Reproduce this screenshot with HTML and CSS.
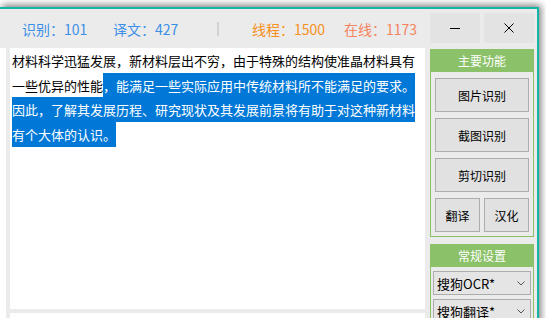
FILE: index.html
```html
<!DOCTYPE html>
<html lang="zh-CN">
  <head>
    <meta charset="UTF-8" />
    <meta name="viewport" content="width=device-width, initial-scale=1.0" />
    <title>OCR 识别</title>
    <link rel="stylesheet" href="styles.css">
  </head>

  <body>
    <div class="window">
      <header class="titlebar">
        <div class="stats">
          <span class="stat stat-ocr">识别：101</span>
          <span class="stat stat-trans">译文：427</span>
          <span class="divider"></span>
          <span class="stat stat-threads">线程：1500</span>
          <span class="stat stat-online">在线：1173</span>
        </div>
        <div class="controls">
          <button class="ctl" aria-label="最小化">
            <svg width="10" height="10" viewBox="0 0 10 10">
              <path d="M0 5.5h10" stroke="#000" stroke-width="1" fill="none" />
            </svg>
          </button>
          <button class="ctl" aria-label="关闭">
            <svg width="10" height="10" viewBox="0 0 10 10">
              <path d="M0.5 0.5l9 9M9.5 0.5l-9 9" stroke="#000" stroke-width="1" fill="none" />
            </svg>
          </button>
        </div>
      </header>

      <div class="main">
        <div class="edge"></div>

        <div class="editor">
          <div class="textbox">材料科学迅猛发展，新材料层出不穷，由于特殊的结构使准晶材料具有一些优异的性能<span class="sel">，能满足一些实际应用中传统材料所不能满足的要求。因此，了解其发展历程、研究现状及其发展前景将有助于对这种新材料有个大体的认识。</span></div>
          <div class="textbox lower"></div>
        </div>

        <aside class="sidebar">
          <section class="group">
            <h2 class="group-title">主要功能</h2>
            <div class="group-body">
              <button class="btn">图片识别</button>
              <button class="btn">截图识别</button>
              <button class="btn">剪切识别</button>
              <div class="btn-row">
                <button class="btn">翻译</button>
                <button class="btn">汉化</button>
              </div>
            </div>
          </section>

          <section class="group">
            <h2 class="group-title">常规设置</h2>
            <div class="group-body settings">
              <div class="select">
                <span>搜狗OCR*</span>
                <svg width="8" height="5" viewBox="0 0 8 5">
                  <path d="M0.5 0.5l3.5 3.5 3.5-3.5" stroke="#555" stroke-width="1" fill="none" />
                </svg>
              </div>
              <div class="select">
                <span>搜狗翻译*</span>
                <svg width="8" height="5" viewBox="0 0 8 5">
                  <path d="M0.5 0.5l3.5 3.5 3.5-3.5" stroke="#555" stroke-width="1" fill="none" />
                </svg>
              </div>
            </div>
          </section>
        </aside>
      </div>
    </div>
  </body>
</html>
```

FILE: styles.css
```css
body {
  margin: 0;
  padding: 0;
  overflow: hidden;
  background-color: #fff;
  font-family: "Noto Sans CJK SC", "Microsoft YaHei", sans-serif;
}

.window {
  margin-top: 7px;
  width: 537px;
  height: 340px;
  border-top: 2px solid #13b6a6;
  border-right: 2px solid #13b6a6;
  background-color: #ebebeb;
  box-shadow: 2px -2px 7px rgba(0, 0, 0, 0.5);
  display: flex;
  flex-direction: column;
}

/* title bar */

.titlebar {
  height: 39px;
  display: flex;
  justify-content: space-between;
  background-color: #ebebeb;
}

.stats {
  display: flex;
  align-items: center;
  padding-left: 22px;
  font-size: 14px;
  line-height: 20px;
}

.stat {
  white-space: nowrap;
}

.stat-ocr {
  width: 91px;
  color: #3b8fe8;
}

.stat-trans {
  width: 104px;
  color: #3b8fe8;
}

.divider {
  width: 2px;
  height: 14px;
  margin-right: 33px;
  background-color: #d2d2d2;
}

.stat-threads {
  width: 92px;
  color: #f7901e;
}

.stat-online {
  color: #f5845e;
}

.controls {
  display: flex;
  gap: 4px;
  padding: 4px 3px 0 0;
}

.ctl {
  width: 50px;
  height: 30px;
  padding: 0;
  border: none;
  background-color: #e3e3e3;
  display: flex;
  align-items: center;
  justify-content: center;
}

/* content */

.main {
  flex: 1;
  display: flex;
}

.edge {
  width: 6px;
  margin-right: 4px;
  background-color: #fff;
}

.editor {
  width: 415px;
  display: flex;
  flex-direction: column;
  gap: 4px;
}

.textbox {
  height: 261px;
  padding: 1px 2px;
  box-sizing: border-box;
  background-color: #fff;
  color: #000;
  font-size: 13px;
  line-height: 24.7px;
}

.textbox.lower {
  flex: 1;
}

.sel {
  padding: 3px 0;
  background-color: #0078d7;
  color: #fff;
}

/* sidebar */

.sidebar {
  width: 104px;
  margin-left: 5px;
  padding-top: 1px;
}

.group {
  border: 1px solid #8bc168;
  border-top: none;
  margin-bottom: 7px;
}

.group-title {
  margin: 0 -1px;
  height: 23px;
  background-color: #8bc168;
  color: #fff;
  font-size: 12px;
  font-weight: normal;
  line-height: 23px;
  text-align: center;
}

.group-body {
  padding: 6px 3px 4px 4px;
}

.btn {
  display: block;
  width: 94px;
  height: 34px;
  margin-bottom: 6px;
  padding: 0;
  border: 1px solid #adadad;
  background-color: #e1e1e1;
  color: #000;
  font-family: inherit;
  font-size: 12px;
}

.btn-row {
  display: flex;
  gap: 4px;
}

.btn-row .btn {
  width: 45px;
  margin-bottom: 0;
}

.settings {
  padding: 4px 2px;
}

.select {
  height: 24px;
  box-sizing: border-box;
  margin-bottom: 4px;
  padding: 0 5px 0 3px;
  border: 1px solid #acacac;
  background-color: #e5e5e5;
  display: flex;
  align-items: center;
  justify-content: space-between;
  font-size: 13px;
  color: #000;
}
```
